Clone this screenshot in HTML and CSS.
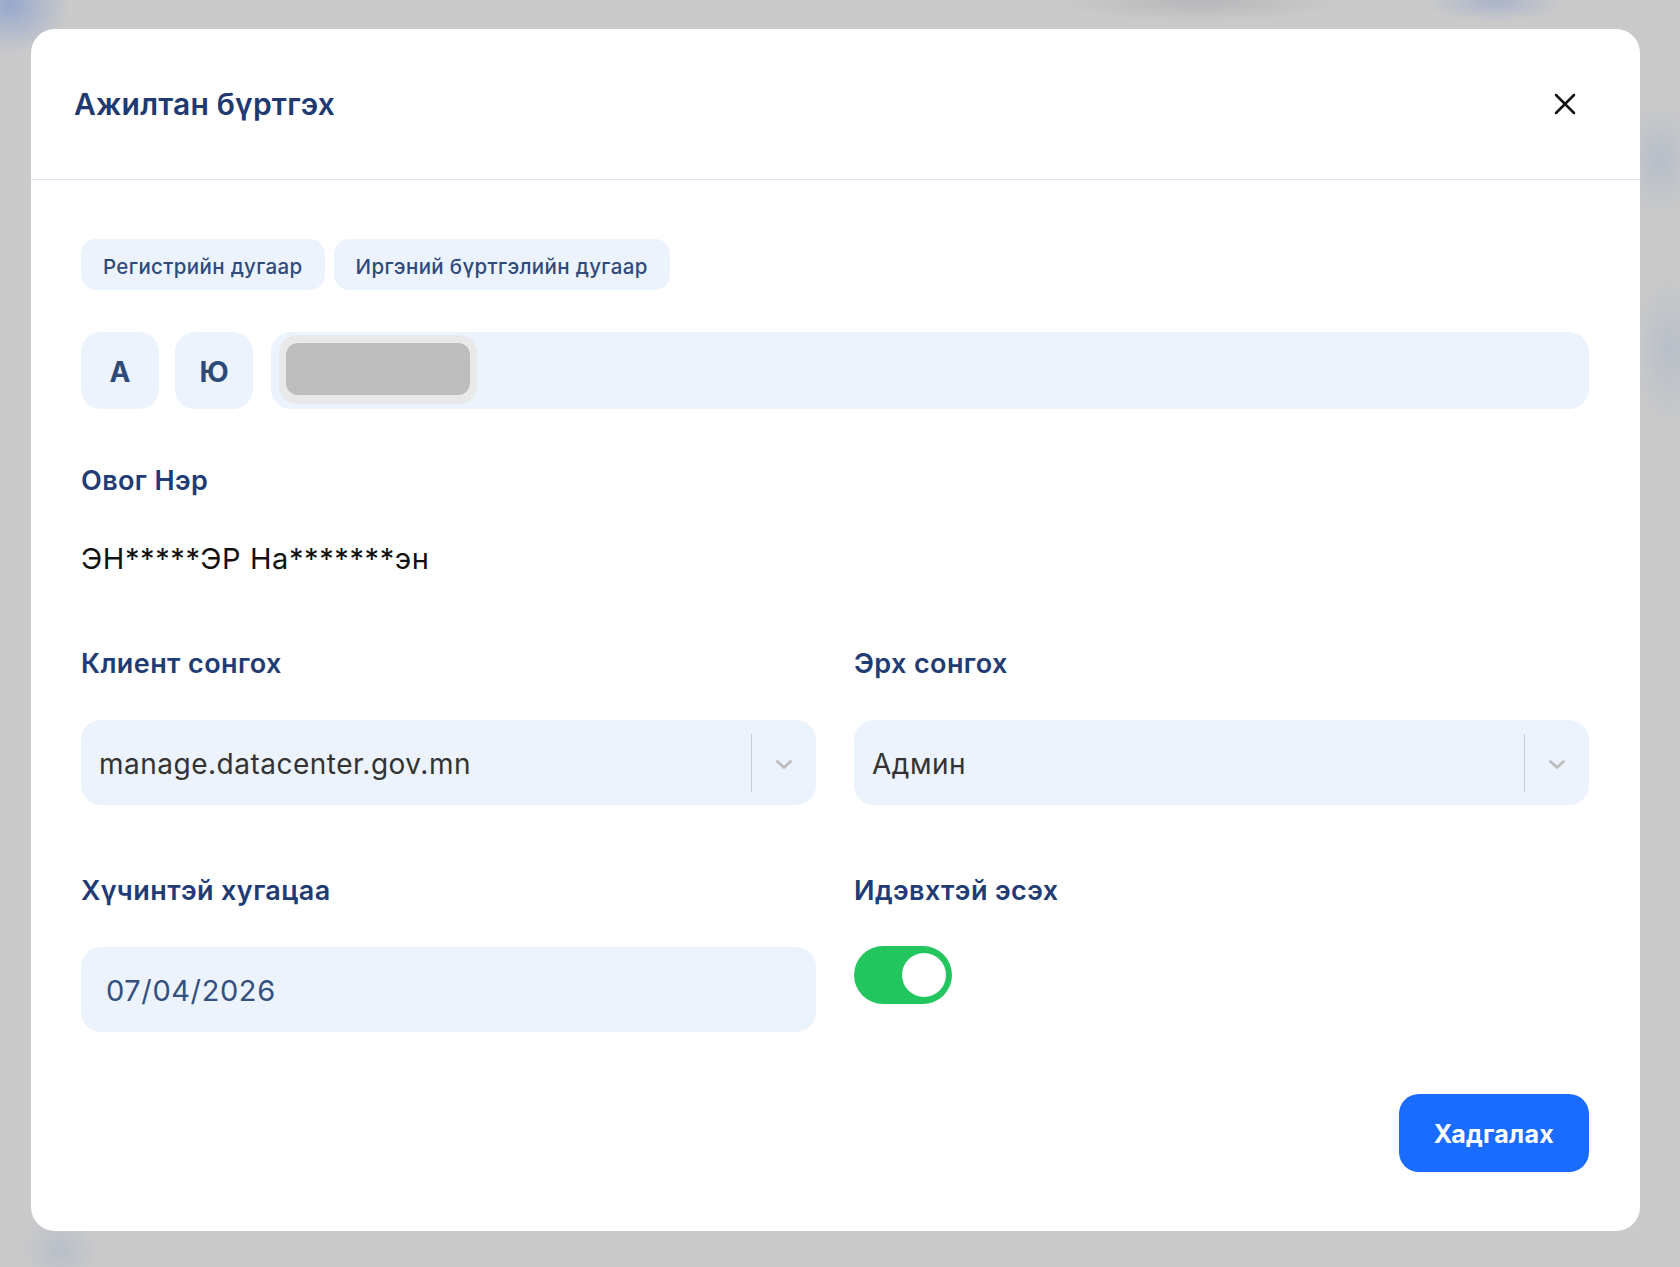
FILE: index.html
```html
<!DOCTYPE html>
<html lang="mn">
<head>
<meta charset="utf-8">
<title>Ажилтан бүртгэх</title>
<link rel="stylesheet" href="styles.css">
</head>
<body>
<div class="modal">
  <header class="modal-header">
    <h2 class="modal-title">Ажилтан бүртгэх</h2>
    <button class="close" aria-label="Хаах">
      <svg width="22" height="22" viewBox="0 0 22 22" fill="none" stroke="#111" stroke-width="2.5" stroke-linecap="round"><path d="M2 2L20 20M20 2L2 20"/></svg>
    </button>
  </header>
  <div class="modal-body">
    <div class="tabs">
      <button class="tab">Регистрийн дугаар</button>
      <button class="tab">Иргэний бүртгэлийн дугаар</button>
    </div>
    <div class="reg-row">
      <button class="letter">А</button>
      <button class="letter">Ю</button>
      <div class="reg-input"><span class="mask"><span class="mask-inner"></span></span></div>
    </div>
    <div class="field">
      <div class="label">Овог Нэр</div>
      <div class="name">ЭН*****ЭР На*******эн</div>
    </div>
    <div class="grid">
      <div class="col">
        <div class="label">Клиент сонгох</div>
        <div class="select">
          <span class="select-value">manage.datacenter.gov.mn</span>
          <span class="select-sep"></span>
          <span class="select-arrow"><svg width="18" height="11" viewBox="0 0 18 11" fill="none" stroke="#bdbdbd" stroke-width="2.8" stroke-linecap="round" stroke-linejoin="round"><path d="M2.5 2.5l6.5 6 6.5-6"/></svg></span>
        </div>
      </div>
      <div class="col">
        <div class="label">Эрх сонгох</div>
        <div class="select">
          <span class="select-value">Админ</span>
          <span class="select-sep"></span>
          <span class="select-arrow"><svg width="18" height="11" viewBox="0 0 18 11" fill="none" stroke="#bdbdbd" stroke-width="2.8" stroke-linecap="round" stroke-linejoin="round"><path d="M2.5 2.5l6.5 6 6.5-6"/></svg></span>
        </div>
      </div>
      <div class="col row2">
        <div class="label">Хүчинтэй хугацаа</div>
        <div class="date">07/04/2026</div>
      </div>
      <div class="col row2">
        <div class="label">Идэвхтэй эсэх</div>
        <div class="toggle"><span class="knob"></span></div>
      </div>
    </div>
    <div class="footer">
      <button class="save">Хадгалах</button>
    </div>
  </div>
</div>
</body>
</html>
```
FILE: styles.css
```css
* { box-sizing: border-box; }
html, body { margin: 0; padding: 0; }
body {
  width: 1680px;
  height: 1267px;
  overflow: hidden;
  font-family: Inter, "Noto Sans", sans-serif;
  background:
    radial-gradient(ellipse 60px 50px at 10px 5px, rgba(140,160,205,0.8), rgba(140,160,205,0) 100%),
    radial-gradient(ellipse 70px 20px at 1495px 2px, rgba(150,165,200,0.6), rgba(150,165,200,0) 100%),
    radial-gradient(ellipse 140px 20px at 1200px 2px, rgba(170,170,175,0.6), rgba(170,170,175,0) 100%),
    radial-gradient(ellipse 40px 60px at 1660px 160px, rgba(175,185,200,0.7), rgba(175,185,200,0) 100%),
    radial-gradient(ellipse 40px 80px at 1670px 350px, rgba(180,188,200,0.8), rgba(180,188,200,0) 100%),
    radial-gradient(ellipse 40px 40px at 60px 1250px, rgba(180,188,200,0.8), rgba(180,188,200,0) 100%),
    #cacaca;
}
button { font-family: inherit; border: 0; cursor: pointer; }

.modal {
  margin: 29px 0 0 31px;
  width: 1609px;
  height: 1202px;
  background: #fff;
  border-radius: 24px;
  display: flex;
  flex-direction: column;
}
.modal-header {
  height: 151px;
  flex: none;
  display: flex;
  align-items: center;
  justify-content: space-between;
  padding: 0 64px 0 43px;
  border-bottom: 1.5px solid #dbe7f2;
}
.modal-title {
  margin: 0;
  font-size: 30px;
  font-weight: 600;
  color: #1e3a70;
  letter-spacing: 0.2px;
}
.close {
  background: none;
  padding: 0;
  width: 22px;
  height: 22px;
  display: flex;
}

.modal-body {
  padding: 59px 51px 58px 50px;
  display: flex;
  flex-direction: column;
}
.tabs { display: flex; gap: 9px; }
.tab {
  height: 51px;
  padding: 3px 22px 0;
  border-radius: 15px;
  background: #ecf3fc;
  color: #2f4b7b;
  font-size: 20.5px;
  font-weight: 500;
  letter-spacing: 0.35px;
}
.reg-row {
  margin-top: 42px;
  display: flex;
  height: 77px;
}
.letter {
  width: 78px;
  height: 77px;
  padding-top: 3px;
  border-radius: 20px;
  background: #ecf3fc;
  color: #2e4a79;
  font-size: 28px;
  font-weight: 700;
  margin-right: 16px;
}
.letter + .letter { margin-right: 18px; }
.reg-input {
  flex: 1;
  background: #ecf3fc;
  border-radius: 20px;
  padding: 3px 8px;
  display: flex;
  align-items: flex-start;
}
.mask {
  width: 198px;
  height: 69px;
  border-radius: 18px;
  background: #e9e9e9;
  padding: 8px 7px 9px;
  display: flex;
}
.mask-inner {
  flex: 1;
  border-radius: 12px;
  background: #bdbdbd;
}

.label {
  font-size: 27px;
  line-height: 32px;
  font-weight: 600;
  color: #1f3c74;
  letter-spacing: 0.4px;
  padding-top: 2px;
  height: 32px;
}
.field { margin-top: 54px; }
.name {
  margin-top: 48px;
  font-size: 29px;
  line-height: 32px;
  color: #111;
  letter-spacing: 0.6px;
}
.grid {
  margin-top: 71px;
  display: grid;
  grid-template-columns: 1fr 1fr;
  column-gap: 38px;
}
.row2 { margin-top: 68px; }
.select {
  margin-top: 42px;
  height: 85px;
  background: #ecf3fc;
  border-radius: 20px;
  display: flex;
  align-items: center;
  padding-left: 18px;
}
.select-value {
  flex: 1;
  font-size: 28px;
  color: #333;
  letter-spacing: 0.5px;
  padding-top: 2px;
}
.select-sep {
  width: 1.5px;
  height: 58px;
  background: #cccccc;
}
.select-arrow {
  width: 64px;
  display: flex;
  justify-content: center;
  padding-top: 3px;
}
.date {
  margin-top: 42px;
  height: 85px;
  background: #ecf3fc;
  border-radius: 20px;
  display: flex;
  align-items: center;
  padding: 2px 0 0 25px;
  font-size: 29px;
  color: #34507e;
  letter-spacing: 0.6px;
}
.toggle {
  margin-top: 41px;
  width: 98px;
  height: 58px;
  border-radius: 29px;
  background: #22c55e;
  display: flex;
  align-items: center;
  justify-content: flex-end;
  padding-right: 6px;
}
.knob {
  width: 44px;
  height: 44px;
  border-radius: 50%;
  background: #fff;
}
.footer {
  margin-top: 62px;
  display: flex;
  justify-content: flex-end;
}
.save {
  width: 190px;
  height: 78px;
  border-radius: 20px;
  background: #1a6bff;
  color: #fff;
  font-size: 25px;
  font-weight: 700;
  letter-spacing: 0.3px;
  padding-top: 2px;
}
```
